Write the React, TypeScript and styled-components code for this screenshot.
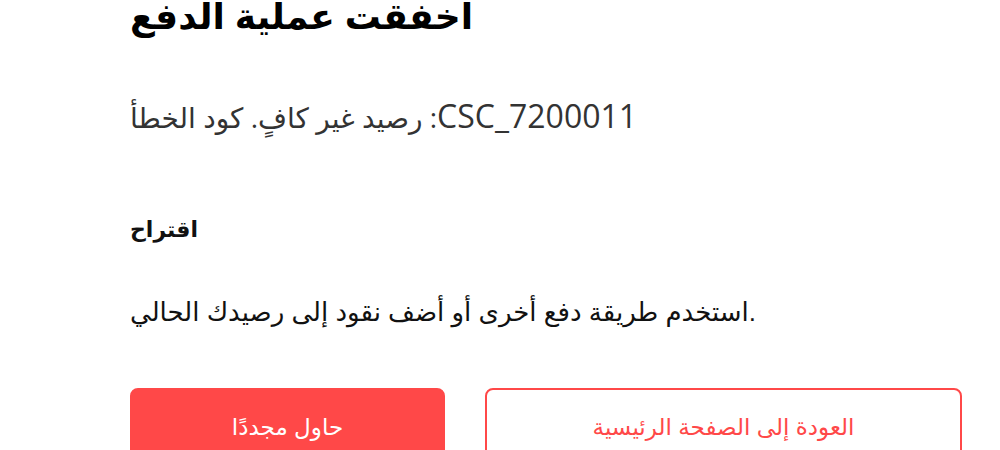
import styled, { createGlobalStyle } from "styled-components";

const GlobalStyle = createGlobalStyle`
  html, body {
    margin: 0;
    padding: 0;
    background: #ffffff;
    overflow: hidden;
  }
`;

const Page = styled.main`
  display: flex;
  flex-direction: column;
  width: 832px;
  margin-left: 130px;
  margin-top: -9px;
  font-family: Arial, "Liberation Sans", "DejaVu Sans", sans-serif;
  color: #111;
`;

const Title = styled.h1`
  margin: 0;
  font-size: 36px;
  font-weight: bold;
  line-height: 52px;
  color: #000;
`;

const ErrorLine = styled.p`
  margin: 53px 0 0;
  font-family: "Open Sans", "DejaVu Sans", sans-serif;
  font-size: 28px;
  line-height: 40px;
  color: #333;
`;

const Code = styled.span`
  font-size: 32px;
`;

const Section = styled.h2`
  margin: 78px 0 0;
  font-size: 22px;
  font-weight: bold;
  line-height: 30px;
  color: #111;
`;

const Suggestion = styled.p`
  margin: 52px 0 0;
  font-size: 26px;
  line-height: 30px;
  color: #111;
`;

const Actions = styled.div`
  display: grid;
  grid-template-columns: 315px 477px;
  gap: 40px;
  margin-top: 61px;
`;

const Button = styled.button<{ $primary?: boolean }>`
  height: 84px;
  border-radius: 8px;
  border: 2px solid #ff4848;
  background: ${(p) => (p.$primary ? "#ff4848" : "#fff")};
  color: ${(p) => (p.$primary ? "#fff" : "#ff4848")};
  font-family: Arial, "Liberation Sans", "DejaVu Sans", sans-serif;
  font-size: 23px;
  padding: 0 24px 6px;
  cursor: pointer;
`;

export default function App() {
  return (
    <>
      <GlobalStyle />
      <Page>
        <Title>اخفقت عملية الدفع</Title>
        <ErrorLine>
          رصيد غير كافٍ. كود الخطأ :<Code>CSC_7200011</Code>
        </ErrorLine>
        <Section>اقتراح</Section>
        <Suggestion>استخدم طريقة دفع أخرى أو أضف نقود إلى رصيدك الحالي.</Suggestion>
        <Actions>
          <Button $primary>حاول مجددًا</Button>
          <Button>العودة إلى الصفحة الرئيسية</Button>
        </Actions>
      </Page>
    </>
  );
}
